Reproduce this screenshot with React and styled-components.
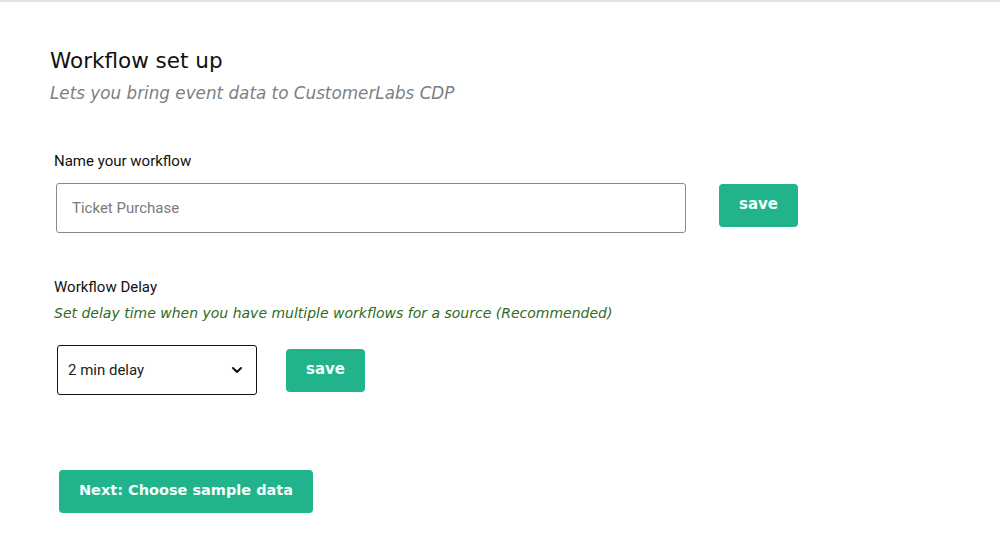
import React from 'react'
import styled, { createGlobalStyle } from 'styled-components'
import { ChevronDown } from 'lucide-react'

const GlobalStyle = createGlobalStyle`
  body {
    margin: 0;
    background: #fff;
    font-family: Roboto, "Liberation Sans", sans-serif;
  }
`

const display = `"DejaVu Sans", "Open Sans", sans-serif`

const Page = styled.div`
  min-height: 558px;
  border-top: 2px solid #e4e4e4;
  box-sizing: border-box;
  padding: 44px 0 0 50px;
`

const Title = styled.h1`
  margin: 0;
  font-family: ${display};
  font-weight: 400;
  font-size: 21.5px;
  line-height: 30px;
  color: #111;
`

const Subtitle = styled.p`
  margin: 5px 0 0;
  font-family: ${display};
  font-style: italic;
  font-size: 16.8px;
  line-height: 24px;
  color: #7b8087;
`

const Form = styled.div`
  display: flex;
  flex-direction: column;
  align-items: flex-start;
  padding-left: 4px;
`

const Label = styled.label`
  font-size: 15px;
  line-height: 20px;
  color: #111;
  margin-top: ${p => p.$top}px;
`

const Hint = styled.p`
  margin: 6px 0 0;
  font-family: ${display};
  font-style: italic;
  font-size: 14px;
  line-height: 20px;
  color: #2f6b22;
`

const Row = styled.div`
  display: flex;
  align-items: flex-start;
  gap: ${p => p.$gap}px;
  margin-top: ${p => p.$top}px;
`

const TextInput = styled.input`
  box-sizing: border-box;
  width: 630px;
  height: 50px;
  margin-left: 2px;
  padding: 0 15px;
  border: 1px solid #8a8a8a;
  border-radius: 3px;
  font-family: Roboto, sans-serif;
  font-size: 15px;
  color: #222;
  outline: none;
  &::placeholder {
    color: #7a7a7a;
  }
`

const SelectWrap = styled.div`
  position: relative;
  margin-left: 3px;
  svg {
    position: absolute;
    right: 12px;
    top: 17px;
    pointer-events: none;
    color: #111;
  }
`

const Select = styled.select`
  box-sizing: border-box;
  appearance: none;
  width: 200px;
  height: 50px;
  padding: 0 10px;
  border: 1px solid #111;
  border-radius: 3px;
  background: #fff;
  font-family: Roboto, sans-serif;
  font-size: 15px;
  color: #222;
  outline: none;
`

const Button = styled.button`
  box-sizing: border-box;
  height: 43px;
  padding: 0 ${p => p.$pad || 10}px;
  min-width: ${p => p.$width || 0}px;
  margin-top: ${p => p.$top || 0}px;
  margin-left: ${p => p.$left || 0}px;
  border: none;
  border-radius: 4px;
  background: #21b48c;
  color: #f2fffa;
  font-family: ${display};
  font-weight: 700;
  font-size: ${p => p.$size || 15}px;
  line-height: 1;
  padding-bottom: 3px;
  cursor: pointer;
`

export default function App() {
  return (
    <>
      <GlobalStyle />
      <Page>
        <Title>Workflow set up</Title>
        <Subtitle>Lets you bring event data to CustomerLabs CDP</Subtitle>
        <Form>
          <Label $top={46}>Name your workflow</Label>
          <Row $top={12} $gap={33}>
            <TextInput placeholder="Ticket Purchase" />
            <Button $width={79} $top={1}>save</Button>
          </Row>
          <Label $top={44}>Workflow Delay</Label>
          <Hint>Set delay time when you have multiple workflows for a source (Recommended)</Hint>
          <Row $top={22} $gap={29}>
            <SelectWrap>
              <Select defaultValue="2">
                <option value="1">1 min delay</option>
                <option value="2">2 min delay</option>
                <option value="5">5 min delay</option>
              </Select>
              <ChevronDown size={16} strokeWidth={3} />
            </SelectWrap>
            <Button $width={79} $top={4}>save</Button>
          </Row>
          <Button $width={254} $top={75} $left={5} $size={14.5}>Next: Choose sample data</Button>
        </Form>
      </Page>
    </>
  )
}
